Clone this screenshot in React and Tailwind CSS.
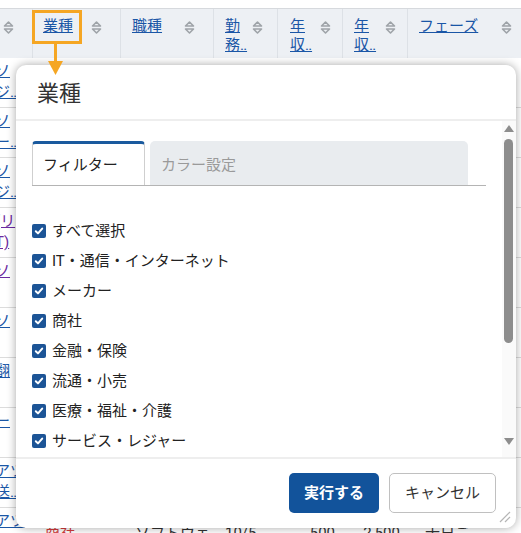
import React from 'react';

const FONT = { fontFamily: 'Roboto, "Noto Sans CJK JP", "Noto Sans", sans-serif' };

const SortIcon = () => (
  <svg width="11" height="15" viewBox="0 0 11 15" fill="none" stroke="#9ea3a8" strokeWidth="1.6" strokeLinejoin="round">
    <path d="M1.5 6 L5.5 2 L9.5 6 Z" />
    <path d="M1.5 9 L5.5 13 L9.5 9 Z" />
  </svg>
);

const CheckBox = () => (
  <span className="w-[14px] h-[14px] rounded-[2px] bg-[#1c5496] flex items-center justify-center shrink-0">
    <svg width="10" height="10" viewBox="0 0 10 10" fill="none" stroke="#fff" strokeWidth="2" strokeLinecap="round" strokeLinejoin="round">
      <path d="M1.8 5.2 L4 7.4 L8.2 2.6" />
    </svg>
  </span>
);

// header cells of the table behind the dialog
const headers = [
  { lines: null, cls: 'pl-[3px] pr-0' },
  { lines: ['業種'], cls: 'pl-[10px] pr-[18px]' },
  { lines: ['職種'], cls: 'pl-[11px] pr-[18px]' },
  { lines: ['勤', '務‥'], cls: 'pl-[11px] pr-[14px]' },
  { lines: ['年', '収‥'], cls: 'pl-[12px] pr-[11px]' },
  { lines: ['年', '収‥'], cls: 'pl-[11px] pr-[11px]' },
  { lines: ['フェーズ'], cls: 'pl-[11px] pr-[9px]' },
];

const leftCells = [
  { lines: ['ソ', 'ジ‥'], visited: false },
  { lines: ['ソ', 'ー‥'], visited: false },
  { lines: ['ソ', 'ジ‥'], visited: false },
  { lines: ['(リ', 'T)'], visited: true },
  { lines: ['ソ'], visited: true },
  { lines: ['ソ'], visited: false },
  { lines: ['翻'], visited: false },
  { lines: ['ー'], visited: false },
  { lines: ['アツ', '送‥'], visited: false },
  { lines: ['アツ'], visited: false },
];

const items = [
  'すべて選択',
  'IT・通信・インターネット',
  'メーカー',
  '商社',
  '金融・保険',
  '流通・小売',
  '医療・福祉・介護',
  'サービス・レジャー',
  'その他',
];

const GRID = 'grid grid-cols-[32px_88px_93px_64px_65px_65px_114px]';

export default function App() {
  return (
    <div className="relative w-[521px] h-[533px] overflow-hidden bg-white text-[15px]" style={FONT}>
      {/* table behind */}
      <div className="pt-[8px]">
        <div className={`${GRID} h-[50px] bg-[#edf0f4] border-t border-[#d6d9dd]`}>
          {headers.map((h, i) => (
            <div key={i} className={`flex justify-between items-start pt-[8px] ${h.cls} ${i > 0 ? 'border-l border-[#dde1e6]' : ''}`}>
              {h.lines ? (
                <span className="text-[#1a56a6] underline leading-[19px]">
                  {h.lines.map((l, j) => (
                    <span key={j} className="block">{l}</span>
                  ))}
                </span>
              ) : null}
              <span className="mt-[3px]"><SortIcon /></span>
            </div>
          ))}
        </div>
        {leftCells.map((r, i) => (
          <div key={i} className={`${GRID} h-[50px] border-b border-[#dcdcdc]`}>
            <div className={`overflow-hidden pt-[3px] leading-[21px] ${r.visited ? 'text-[#6b2aa0]' : 'text-[#1a56a6]'}`}>
              {r.lines.map((l, j) => (
                <span key={j} className="block -ml-[5px] underline whitespace-nowrap">{l}</span>
              ))}
            </div>
            {i === leftCells.length - 1 ? (
              <>
                <div className="pl-[13px] pt-[14px] text-[#d43c3c]">商社</div>
                <div className="pl-[15px] pt-[14px] text-[#333]">ソフトウェ</div>
                <div className="pl-[12px] pt-[14px] text-[#333]">10/5</div>
                <div className="pr-[7px] pt-[14px] text-right text-[#333]">500</div>
                <div className="pr-[7px] pt-[14px] text-right text-[#333]">2,500</div>
                <div className="pl-[18px] pt-[14px] text-[#333]">十日ご</div>
              </>
            ) : (
              <div className="col-span-6" />
            )}
          </div>
        ))}
      </div>

      {/* filter dialog */}
      <div className="absolute left-[16px] top-[65px] w-[500px] h-[463px] bg-white rounded-[10px] shadow-[0_0_10px_rgba(0,0,0,0.35)] flex flex-col overflow-hidden">
        <div className="h-[56px] shrink-0 pl-[21px] pt-[14px] border-b-2 border-[#eeeeee]">
          <h2 className="text-[22px] leading-[30px] text-[#333]">業種</h2>
        </div>

        <div className="flex flex-1 min-h-0">
          <div className="flex-1 overflow-hidden px-[16px] pt-[20px]">
            {/* tabs */}
            <div className="flex border-b border-[#b4b4b4]">
              <div className="w-[113px] h-[44px] -mb-px bg-white border-t-[3px] border-t-[#1a5a9e] border-x border-x-[#cfcfcf] rounded-t-[4px] flex items-center pl-[10px] pt-[2px] text-[#222]">
                フィルター
              </div>
              <div className="ml-[5px] w-[318px] h-[44px] bg-[#e9ecef] rounded-t-[5px] flex items-center pl-[11px] pt-[5px] text-[#9a9a9a]">
                カラー設定
              </div>
            </div>

            {/* check list */}
            <div className="mt-[30px]">
              {items.map((it) => (
                <label key={it} className="h-[30px] flex items-center gap-[6px] text-[#222]">
                  <CheckBox />
                  <span>{it}</span>
                </label>
              ))}
            </div>
          </div>

          {/* scrollbar */}
          <div className="relative w-[14px] shrink-0 bg-[#fafafa]">
            <svg className="absolute left-[2px] top-[4px]" width="10" height="7" viewBox="0 0 10 7">
              <path d="M0 7 L5 0 L10 7 Z" fill="#8d8d8d" />
            </svg>
            <div className="absolute left-[2px] top-[18px] w-[9px] h-[204px] rounded-full bg-[#8d8d8d]" />
            <svg className="absolute left-[2px] top-[317px]" width="10" height="7" viewBox="0 0 10 7">
              <path d="M0 0 L5 7 L10 0 Z" fill="#8d8d8d" />
            </svg>
          </div>
        </div>

        <div className="h-[71px] shrink-0 border-t-2 border-[#eeeeee] flex justify-end items-start gap-[10px] pt-[14px] pr-[20px]">
          <button className="w-[90px] h-[40px] rounded-[5px] bg-[#12539b] text-white font-bold">実行する</button>
          <button className="w-[107px] h-[40px] rounded-[5px] border border-[#c0c0c0] bg-white text-[#333]">キャンセル</button>
        </div>

        {/* resize grip */}
        <svg className="absolute right-[5px] bottom-[5px]" width="12" height="12" viewBox="0 0 12 12" stroke="#b5b5b5" strokeWidth="1.2">
          <path d="M1 11 L11 1" />
          <path d="M6 11 L11 6" />
        </svg>
      </div>

      {/* highlight + arrow */}
      <div className="absolute left-[32px] top-[10px] w-[50px] h-[34px] border-[3px] border-[#f5a623]" />
      <div className="absolute left-[54px] top-[43px] w-[3px] h-[19px] bg-[#f5a623]" />
      <svg className="absolute left-[48px] top-[61px]" width="15" height="14" viewBox="0 0 15 14">
        <path d="M0 0 L15 0 L7.5 14 Z" fill="#f5a623" />
      </svg>
    </div>
  );
}
